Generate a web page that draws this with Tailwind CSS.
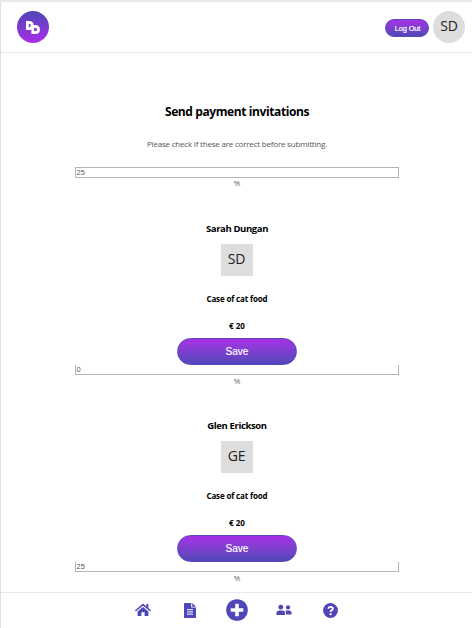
<!DOCTYPE html>
<html lang="en">
<head>
<meta charset="utf-8">
<title>Send payment invitations</title>
<script src="https://cdn.jsdelivr.net/npm/@tailwindcss/browser@4"></script>
</head>
<body class="w-[472px] h-[628px] overflow-hidden bg-white text-black font-['Open_Sans','Noto_Sans',sans-serif]">
<div class="flex flex-col h-[628px] border-l border-t-2 border-l-[#e0e0e0] border-t-[#e9e9e9]">
  <header class="flex items-center justify-between h-[51px] shrink-0 border-b border-[#e8e8e8] pl-4 pr-[7px]">
    <svg class="size-8 mb-px" viewBox="0 0 32 32" aria-label="Logo">
      <defs><linearGradient id="g" x1="0" y1="0" x2="0" y2="1"><stop offset="0" stop-color="#4f46b8"/><stop offset="1" stop-color="#a82ee6"/></linearGradient></defs>
      <circle cx="16" cy="16" r="16" fill="url(#g)"/>
      <g fill="none" stroke="#fff" stroke-width="2.8">
        <path d="M10.4 11.3V17.6H12.2C14.4 17.6 15.2 16.4 15.2 14.4S14.4 11.3 12.2 11.3Z"/>
        <path d="M15.8 15.4V21.7H18C20.5 21.7 21.5 20.4 21.5 18.5S20.5 15.4 18 15.4Z"/>
      </g>
    </svg>
    <div class="flex items-center gap-1 mb-px">
      <button class="w-[44px] h-[18px] mt-[2px] rounded-full border border-[#5548bd] bg-linear-to-b from-[#a82ee6] to-[#4f46b8] text-white text-[7.5px] leading-[17px] tracking-[-0.2px] [-webkit-text-stroke:0.2px_white] pl-px font-['Liberation_Sans',sans-serif]">Log Out</button>
      <div class="size-8 rounded-full bg-[#dddddd] flex items-center justify-center pb-[2px] text-[14px] text-[#222] tracking-[-0.2px]">SD</div>
    </div>
  </header>
  <main class="flex flex-col items-center h-[539px] shrink-0 overflow-hidden">
    <h1 class="mt-[49px] h-5 leading-5 text-[12px] font-bold tracking-[-0.4px] pl-px whitespace-nowrap">Send payment invitations</h1>
    <p class="mt-[16px] h-[12px] leading-[12px] text-[8px] text-[#555] tracking-[-0.2px] pl-px whitespace-nowrap">Please check if these are correct before submitting.</p>
    <div class="mt-[17px] w-[324px] h-[11px] border border-[#b3b3b3] px-px text-[7.5px] leading-[10px] text-[#555] font-['Liberation_Sans',sans-serif]">25</div>
    <div class="h-[11px] leading-[10px] text-[8px] text-[#666] pl-px">%</div>
    <section class="flex flex-col items-center mt-[32px] h-[165px] shrink-0">
      <h2 class="h-4 leading-4 text-[9.5px] font-bold tracking-[-0.37px] pl-px whitespace-nowrap">Sarah Dungan</h2>
      <div class="mt-[7px] size-8 shrink-0 bg-[#dddddd] flex items-center justify-center pb-[3px] text-[14px] text-[#222] tracking-[-0.2px]">SD</div>
      <h3 class="mt-[17px] h-3 leading-3 text-[8px] font-bold tracking-[-0.15px] pl-px whitespace-nowrap">Case of cat food</h3>
      <h3 class="mt-[15px] h-3 leading-3 text-[8px] font-bold pl-px">€ 20</h3>
      <button class="mt-[6px] w-[120px] h-[27px] shrink-0 rounded-full border border-[#5548bd] bg-linear-to-b from-[#a82ee6] to-[#4f46b8] text-white text-[10px] leading-[25px] pl-px [-webkit-text-stroke:0.15px_white] font-['Liberation_Sans',sans-serif]">Save</button>
      <div class="w-[324px] h-[10px] shrink-0 border border-t-0 border-[#b3b3b3] px-px text-[7.5px] leading-[10px] text-[#555] font-['Liberation_Sans',sans-serif]">0</div>
      <div class="h-[11px] leading-[11px] text-[8px] text-[#666] pl-px">%</div>
    </section>
    <section class="flex flex-col items-center mt-[32px] h-[165px] shrink-0">
      <h2 class="h-4 leading-4 text-[9.5px] font-bold tracking-[-0.37px] pl-px whitespace-nowrap">Glen Erickson</h2>
      <div class="mt-[7px] size-8 shrink-0 bg-[#dddddd] flex items-center justify-center pb-[3px] text-[14px] text-[#222] tracking-[-0.2px]">GE</div>
      <h3 class="mt-[17px] h-3 leading-3 text-[8px] font-bold tracking-[-0.15px] pl-px whitespace-nowrap">Case of cat food</h3>
      <h3 class="mt-[15px] h-3 leading-3 text-[8px] font-bold pl-px">€ 20</h3>
      <button class="mt-[6px] w-[120px] h-[27px] shrink-0 rounded-full border border-[#5548bd] bg-linear-to-b from-[#a82ee6] to-[#4f46b8] text-white text-[10px] leading-[25px] pl-px [-webkit-text-stroke:0.15px_white] font-['Liberation_Sans',sans-serif]">Save</button>
      <div class="w-[324px] h-[10px] shrink-0 border border-t-0 border-[#b3b3b3] px-px text-[7.5px] leading-[10px] text-[#555] font-['Liberation_Sans',sans-serif]">25</div>
      <div class="h-[11px] leading-[11px] text-[8px] text-[#666] pl-px">%</div>
    </section>
  </main>
  <nav class="grid grid-cols-[repeat(5,47px)] justify-center items-center h-[36px] shrink-0 border-t border-[#e8e8e8] pb-px text-[#4f46b8]">
    <svg class="w-[16px] h-[14px] justify-self-center" viewBox="0 0 16 14" fill="currentColor"><path d="M8 3.9L2.6 8.4V12.6Q2.6 13.1 3.1 13.1H6.4V9.2H9.6V13.1H12.9Q13.4 13.1 13.4 12.6V8.4Z"/><path d="M.9 7.5L8 1.6L15.1 7.5" fill="none" stroke="currentColor" stroke-width="1.5" stroke-linecap="round"/><path d="M11.4 1H13.4V6L11.4 4.3Z"/></svg>
    <svg class="w-[12px] h-[15px] justify-self-center" viewBox="0 0 12 15"><path fill="currentColor" d="M.8 0H7.2V3.9Q7.2 4.6 7.9 4.6H12V14.2Q12 15 11.2 15H.8Q0 15 0 14.2V.8Q0 0 .8 0ZM8.2 0L12 3.7H8.2Z"/><path stroke="#fff" stroke-width="1" d="M3 6.7H9M3 8.9H9M3 11.1H9"/></svg>
    <svg class="size-[22px] justify-self-center" viewBox="0 0 22 22"><circle cx="11" cy="11" r="10.8" fill="currentColor"/><path d="M11 4.7V17.3M4.7 11H17.3" stroke="#fff" stroke-width="3.6"/></svg>
    <svg class="w-[16px] h-[12px] justify-self-center" viewBox="0 0 16 12" fill="currentColor"><circle cx="4.8" cy="3.2" r="2.4"/><circle cx="12" cy="3.4" r="2.1"/><path d="M.4 10.9V9.2C.4 7.5 1.7 6.4 3.2 6.4H6.4C7.9 6.4 9.1 7.5 9.1 9.2V10.9ZM10 10.8V9.2Q10 7.6 9.2 6.8Q9.7 6.4 10.6 6.4H13.2C14.6 6.4 15.6 7.5 15.6 8.9V10.5H10Z"/></svg>
    <svg class="size-[15px] justify-self-center" viewBox="0 0 15 15"><circle cx="7.5" cy="7.5" r="7.4" fill="currentColor"/><path d="M5.2 5.7Q5.8 3.9 7.6 3.9Q9.8 3.9 9.8 5.8C9.8 7.3 7.6 7.3 7.6 8.9" fill="none" stroke="#fff" stroke-width="1.8"/><circle cx="7.6" cy="11.2" r="1.1" fill="#fff"/></svg>
  </nav>
</div>
</body>
</html>
